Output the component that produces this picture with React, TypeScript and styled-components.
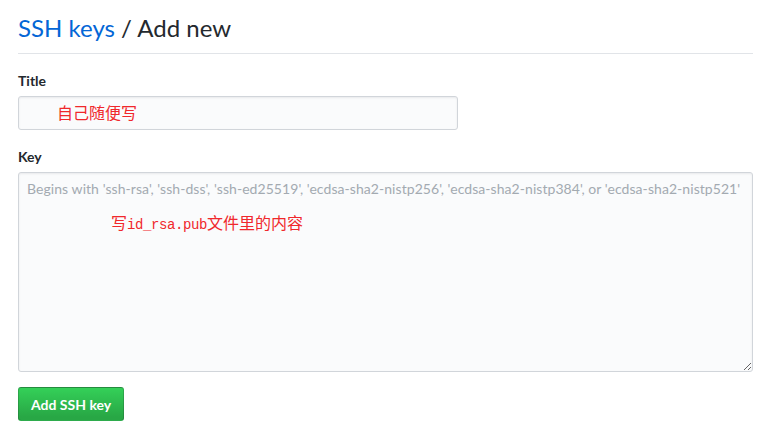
import React from 'react';
import styled, { createGlobalStyle } from 'styled-components';

const GlobalStyle = createGlobalStyle`
  html, body {
    margin: 0;
    padding: 0;
    background: #fff;
  }
  body {
    font-family: Lato, "Liberation Sans", Arial, sans-serif;
    font-size: 14px;
    line-height: 1.5;
    color: #24292e;
  }
`;

const Page = styled.div`
  width: 735px;
  padding: 13px 15px 0 18px;
`;

const Heading = styled.h2`
  margin: 0 0 16px;
  padding-bottom: 10px;
  font-size: 24px;
  font-weight: 400;
  line-height: 30px;
  border-bottom: 1px solid #e1e4e8;
`;

const Crumb = styled.a`
  color: #0366d6;
  text-decoration: none;
`;

const Field = styled.div<{ $gap?: number }>`
  margin-bottom: ${(p) => p.$gap ?? 16}px;
`;

const Label = styled.label`
  display: block;
  margin-bottom: 5px;
  font-weight: 700;
  line-height: 21px;
`;

const Wrap = styled.div`
  position: relative;
`;

const Input = styled.input<{ $width?: string }>`
  display: block;
  box-sizing: border-box;
  width: ${(p) => p.$width ?? '100%'};
  height: 34px;
  padding: 6px 8px;
  font: inherit;
  color: #24292e;
  background: #fafbfc;
  border: 1px solid #d1d5da;
  border-radius: 3px;
  box-shadow: inset 0 1px 2px rgba(27, 31, 35, 0.075);
  outline: none;
`;

const TextArea = styled.textarea`
  display: block;
  box-sizing: border-box;
  width: 100%;
  height: 200px;
  padding: 6px 8px;
  font: inherit;
  line-height: 20px;
  color: #24292e;
  background: #fafbfc;
  border: 1px solid #d1d5da;
  border-radius: 3px;
  box-shadow: inset 0 1px 2px rgba(27, 31, 35, 0.075);
  outline: none;
  resize: vertical;

  &::placeholder {
    color: #a3aab1;
    letter-spacing: 0.06px;
  }
`;

const Note = styled.span<{ $left: number; $top: number }>`
  position: absolute;
  left: ${(p) => p.$left}px;
  top: ${(p) => p.$top}px;
  font-family: "Noto Sans CJK SC", sans-serif;
  font-size: 16px;
  line-height: 18px;
  color: #f0282c;
  white-space: nowrap;
  pointer-events: none;
`;

const Mono = styled.span`
  font-family: "Liberation Mono", monospace;
  font-size: 14px;
  letter-spacing: -0.4px;
`;

const Button = styled.button`
  box-sizing: border-box;
  height: 34px;
  padding: 0 12px;
  font: inherit;
  font-weight: 700;
  color: #fff;
  background-image: linear-gradient(-180deg, #34d058 0%, #28a745 90%);
  border: 1px solid rgba(27, 31, 35, 0.2);
  border-radius: 3px;
  cursor: pointer;
`;

export default function App() {
  return (
    <>
      <GlobalStyle />
      <Page>
        <Heading>
          <Crumb href="#">SSH keys</Crumb> / Add new
        </Heading>
        <Field>
          <Label>Title</Label>
          <Wrap>
            <Input $width="440px" />
            <Note $left={39} $top={7}>自己随便写</Note>
          </Wrap>
        </Field>
        <Field $gap={15}>
          <Label>Key</Label>
          <Wrap>
            <TextArea placeholder="Begins with 'ssh-rsa', 'ssh-dss', 'ssh-ed25519', 'ecdsa-sha2-nistp256', 'ecdsa-sha2-nistp384', or 'ecdsa-sha2-nistp521'" />
            <Note $left={93} $top={41}>
              写<Mono>id_rsa.pub</Mono>文件里的内容
            </Note>
          </Wrap>
        </Field>
        <Button>Add SSH key</Button>
      </Page>
    </>
  );
}
